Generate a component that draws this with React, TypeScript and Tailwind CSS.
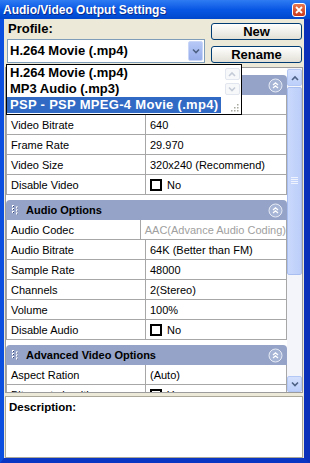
import React from 'react';

type Row = { label: string; value?: string; check?: 'no' | 'yes'; dim?: boolean };

const sections: { title: string; rows: Row[] }[] = [
  {
    title: 'Video Options',
    rows: [
      { label: 'Video Codec', value: 'MPEG-4' },
      { label: 'Video Bitrate', value: '640' },
      { label: 'Frame Rate', value: '29.970' },
      { label: 'Video Size', value: '320x240 (Recommend)' },
      { label: 'Disable Video', check: 'no' },
    ],
  },
  {
    title: 'Audio Options',
    rows: [
      { label: 'Audio Codec', value: 'AAC(Advance Audio Coding)', dim: true },
      { label: 'Audio Bitrate', value: '64K (Better than FM)' },
      { label: 'Sample Rate', value: '48000' },
      { label: 'Channels', value: '2(Stereo)' },
      { label: 'Volume', value: '100%' },
      { label: 'Disable Audio', check: 'no' },
    ],
  },
  {
    title: 'Advanced Video Options',
    rows: [
      { label: 'Aspect Ration', value: '(Auto)' },
      { label: 'Bit exact algorithms', check: 'yes' },
    ],
  },
];

function Check({ on }: { on?: boolean }) {
  return (
    <span className="w-[12px] h-[12px] border-2 border-black bg-white flex items-center justify-center shrink-0">
      {on && (
        <svg width="8" height="8" viewBox="0 0 8 8">
          <path d="M1 4 L3 6 L7 1.5" stroke="#000" strokeWidth="1.6" fill="none" />
        </svg>
      )}
    </span>
  );
}

function Grip() {
  return (
    <svg width="7" height="11" viewBox="0 0 7 11">
      {[0, 3, 6].map((y) => (
        <g key={y}>
          <rect x="0" y={y} width="2" height="2" fill="#fff" />
          <rect x="1" y={y + 1} width="1" height="1" fill="#34457A" />
        </g>
      ))}
      {[1.5, 4.5, 7.5].map((y) => (
        <g key={y}>
          <rect x="4" y={y} width="2" height="2" fill="#fff" />
          <rect x="5" y={y + 1} width="1" height="1" fill="#34457A" />
        </g>
      ))}
    </svg>
  );
}

function Collapse() {
  return (
    <svg width="15" height="15" viewBox="0 0 15 15">
      <circle cx="7.5" cy="7.5" r="6.5" fill="#A6B4D5" stroke="#E6EBF5" strokeWidth="1" />
      <path d="M5 7 L7.5 4.8 L10 7 M5 10 L7.5 7.8 L10 10" stroke="#fff" strokeWidth="1.3" fill="none" />
    </svg>
  );
}

function Chevron({ up, color = '#4D6185' }: { up?: boolean; color?: string }) {
  return (
    <svg width="8" height="6" viewBox="0 0 8 6">
      <path d={up ? 'M1 5 L4 2 L7 5' : 'M1 1.5 L4 4.5 L7 1.5'} stroke={color} strokeWidth="1.6" fill="none" />
    </svg>
  );
}

export default function App() {
  return (
    <div className="w-[310px] h-[463px] flex flex-col font-['Liberation_Sans',Arial,sans-serif] text-black overflow-hidden">
      {/* title bar */}
      <div className="h-[19px] flex items-center bg-gradient-to-b from-[#2E7BF3] via-[#0857E4] to-[#0048CC] pl-[3px] pr-[4px]">
        <span className="text-white font-bold text-[12px] leading-none [text-shadow:1px_1px_0_#0A2B8C]">
          Audio/Video Output Settings
        </span>
        <span className="ml-auto w-[14px] h-[14px] rounded-[3px] border border-white bg-gradient-to-b from-[#E8774F] to-[#C8361A] flex items-center justify-center">
          <svg width="8" height="8" viewBox="0 0 8 8">
            <path d="M1 1 L7 7 M7 1 L1 7" stroke="#fff" strokeWidth="1.8" />
          </svg>
        </span>
      </div>

      {/* body */}
      <div className="relative flex-1 flex flex-col bg-[#ECE9D8] border-l-4 border-r-[6px] border-b-[5px] border-l-[#0B4FE0] border-r-[#0A2FB8] border-b-[#0A36C4] px-[1px]">
        <div className="h-[48px] flex">
          <div className="flex flex-col pl-[2px] pt-[2px]">
            <div className="h-[16px] leading-[16px] pl-[1px] font-bold text-[13px]">Profile:</div>
            <div className="mt-[2px] w-[198px] h-[24px] border border-[#7F9DB9] bg-white flex items-center pl-[2px] pr-[1px]">
              <span className="font-bold text-[13px] leading-[16px]">H.264 Movie (.mp4)</span>
              <span className="ml-auto w-[15px] h-[20px] rounded-[2px] border border-[#C9D6F8] bg-gradient-to-b from-[#B6C8F6] to-[#98AEEA] flex items-center justify-center">
                <Chevron color="#4D6185" />
              </span>
            </div>
          </div>
          <div className="ml-auto mr-[1px] pt-[4px] flex flex-col gap-[6px]">
            <div className="w-[91px] h-[17px] rounded-[3px] border border-[#003C74] bg-gradient-to-b from-white to-[#E2E0D6] flex items-center justify-center font-bold text-[13px] leading-[15px]">
              New
            </div>
            <div className="w-[91px] h-[17px] rounded-[3px] border border-[#003C74] bg-gradient-to-b from-white to-[#E2E0D6] flex items-center justify-center font-bold text-[13px] leading-[15px]">
              Rename
            </div>
          </div>
        </div>

        {/* property grid */}
        <div className="h-[326px] border border-[#9C9C9C] bg-white flex">
          <div className="w-[282px] overflow-hidden">
            {sections.map((s, i) => (
              <div key={s.title} className={`w-[281px] ${i === 0 ? 'mt-[7px]' : 'mt-[5px]'}`}>
                <div className="h-[20px] rounded-t-[4px] bg-[#94A3C7] flex items-center pl-[6px] pr-[4px]">
                  <Grip />
                  <span className="ml-[7px] font-bold text-[11px] leading-[14px]">{s.title}</span>
                  <span className="ml-auto flex">
                    <Collapse />
                  </span>
                </div>
                {s.rows.map((r) => (
                  <div key={r.label} className="h-[20px] flex border-l border-r border-b border-[#A7A7A7] text-[11px] leading-[14px]">
                    <div className="w-[139px] border-r border-[#A7A7A7] pl-[4px] flex items-center whitespace-nowrap">
                      {r.label}
                    </div>
                    <div className={`flex-1 pl-[4px] flex items-center whitespace-nowrap ${r.dim ? 'text-[#A0A0A0]' : ''}`}>
                      {r.check ? (
                        <>
                          <Check on={r.check === 'yes'} />
                          <span className="ml-[5px]">{r.check === 'yes' ? 'Yes' : 'No'}</span>
                        </>
                      ) : (
                        r.value
                      )}
                    </div>
                  </div>
                ))}
              </div>
            ))}
          </div>

          {/* scrollbar */}
          <div className="w-[15px] ml-auto flex flex-col bg-[#F3F5FB]">
            <div className="h-[17px] mt-[1px] rounded-[2px] border border-[#B4C8F6] bg-gradient-to-b from-[#D4E0FD] to-[#BCCFFA] flex items-center justify-center">
              <Chevron up />
            </div>
            <div className="flex-1 flex flex-col">
              <div className="mt-[1px] h-[188px] rounded-[2px] border border-[#A9BEF0] bg-gradient-to-r from-[#C9D8FC] to-[#BCCEF9] flex items-center justify-center">
                <svg width="7" height="8" viewBox="0 0 7 8">
                  {[0, 2, 4, 6].map((y) => (
                    <rect key={y} x="0" y={y} width="7" height="1" fill="#EEF3FE" />
                  ))}
                </svg>
              </div>
            </div>
            <div className="h-[16px] rounded-[2px] border border-[#B4C8F6] bg-gradient-to-b from-[#D4E0FD] to-[#BCCFFA] flex items-center justify-center">
              <Chevron />
            </div>
          </div>
        </div>

        {/* description */}
        <div className="mt-[3px] h-[62px] border border-[#ACA899] bg-white pl-[3px] pt-[3px]">
          <div className="font-bold text-[11.5px] leading-[14px]">Description:</div>
        </div>

        {/* open profile list */}
        <div className="absolute left-[2px] top-[45px] w-[236px] h-[51px] border border-black bg-white flex">
          <div className="w-[216px] flex flex-col">
            <div className="h-[16px] pl-[3px] flex items-center font-bold text-[13px] leading-[16px]">H.264 Movie (.mp4)</div>
            <div className="h-[16px] pl-[3px] flex items-center font-bold text-[13px] leading-[16px]">MP3 Audio (.mp3)</div>
            <div className="h-[16px] mr-[2px] pl-[3px] flex items-center font-bold text-[13px] leading-[16px] bg-[#316AC5] text-white whitespace-nowrap tracking-[0.3px]">
              PSP - PSP MPEG-4 Movie (.mp4)
            </div>
          </div>
          <div className="flex-1 flex flex-col items-center pt-[3px] gap-[3px]">
            <div className="w-[15px] h-[12px] rounded-[2px] border border-[#E2E6EE] bg-[#F7F8FA] flex items-center justify-center">
              <Chevron up color="#C5CCD8" />
            </div>
            <div className="w-[15px] h-[12px] rounded-[2px] border border-[#E2E6EE] bg-[#F7F8FA] flex items-center justify-center">
              <Chevron color="#C5CCD8" />
            </div>
            <div className="self-end mr-[2px] mt-auto mb-[2px]">
              <svg width="8" height="8" viewBox="0 0 8 8">
                {[[6, 0], [3, 3], [6, 3], [0, 6], [3, 6], [6, 6]].map(([x, y]) => (
                  <rect key={`${x}-${y}`} x={x} y={y} width="1.5" height="1.5" fill="#A8A89E" />
                ))}
              </svg>
            </div>
          </div>
        </div>
      </div>
    </div>
  );
}
